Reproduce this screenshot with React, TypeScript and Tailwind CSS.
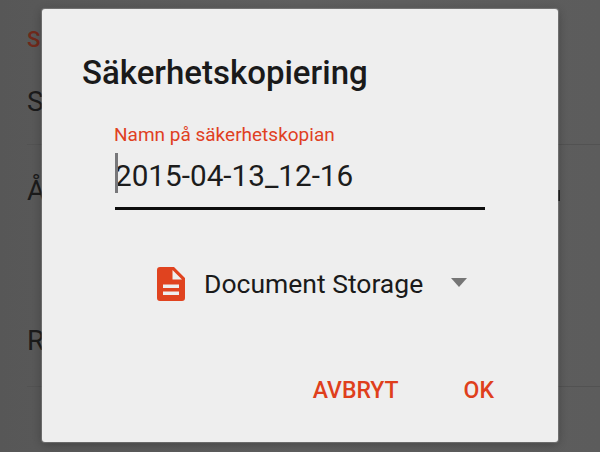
export default function App() {
  return (
    <div className="relative w-[600px] h-[452px] overflow-hidden bg-[#5f5f5f] font-['Roboto',sans-serif]">
      {/* Settings list behind the dialog */}
      <div className="pl-[27px] bg-gradient-to-r from-[#575757] via-[#5f5f5f] to-[#5c5c5c] h-full">
        <div className="h-[145px] border-b border-[#525252]">
          <p className="pt-[27px] text-[22px] leading-[26px] font-medium text-[#70291a]">S</p>
          <p className="pt-[33px] text-[28px] leading-[32px] text-[#1b1b1b]">S</p>
        </div>
        <div className="h-[242px] border-b border-[#525252]">
          <p className="pt-[30px] text-[28px] leading-[32px] text-[#1b1b1b]">Å</p>
          <p className="pt-[118px] text-[28px] leading-[32px] text-[#1b1b1b]">R</p>
        </div>
      </div>

      {/* tip of a value text that sticks out right of the dialog */}
      <span className="absolute left-[558px] top-[190px] w-[2px] h-[11px] bg-[#1b1b1b]" />

      {/* Dialog */}
      <div className="absolute left-[42px] top-[9px] w-[516px] h-[433px] rounded-[3px] bg-[#eeeeee] shadow-[0_0_1px_1px_rgba(255,255,255,0.2),0_2px_10px_rgba(0,0,0,0.3)] px-[40px] pt-[42px] flex flex-col">
        <h1 className="text-[33px] leading-[44px] font-medium text-[#1a1a1a]">Säkerhetskopiering</h1>

        <div className="ml-[33px] w-[370px] mt-[29px]">
          <label className="block -ml-[1px] text-[19px] leading-[22px] text-[#e0401f]">Namn på säkerhetskopian</label>
          <div className="relative mt-[8px] h-[53px] border-b-[3px] border-[#0d0d0d] box-content">
            <span className="absolute left-0 top-[-1px] w-[3px] h-[40px] bg-[#77777a]" />
            <div className="text-[29.700px] leading-[44px] text-[#1c1c1c]">2015-04-13_12-16</div>
          </div>
        </div>

        <div className="mt-[57px] ml-[75px] flex items-center">
          <svg width="28" height="34" viewBox="0 0 28 34" className="shrink-0">
            <path
              fill="#e0431f"
              fillRule="evenodd"
              d="M3 0H17L28 11V31a3 3 0 0 1-3 3H3a3 3 0 0 1-3-3V3a3 3 0 0 1 3-3ZM15.500 3V12.500H25L15.500 3ZM6 17.500V21H22V17.500H6ZM6 24.500V28H22V24.500H6Z"
            />
          </svg>
          <span className="ml-[19px] text-[26.500px] leading-[34px] text-[#1a1a1a]">Document Storage</span>
          <svg width="16" height="9" viewBox="0 0 16 9" className="ml-[28px] mb-[4px]">
            <path d="M0 0H16L8 9Z" fill="#757575" />
          </svg>
        </div>

        <div className="mt-auto mb-[38px] flex justify-end items-center gap-[65px] pr-[24px] text-[23px] leading-[26px] font-medium text-[#df3f1c]">
          <button>AVBRYT</button>
          <button>OK</button>
        </div>
      </div>
    </div>
  );
}
